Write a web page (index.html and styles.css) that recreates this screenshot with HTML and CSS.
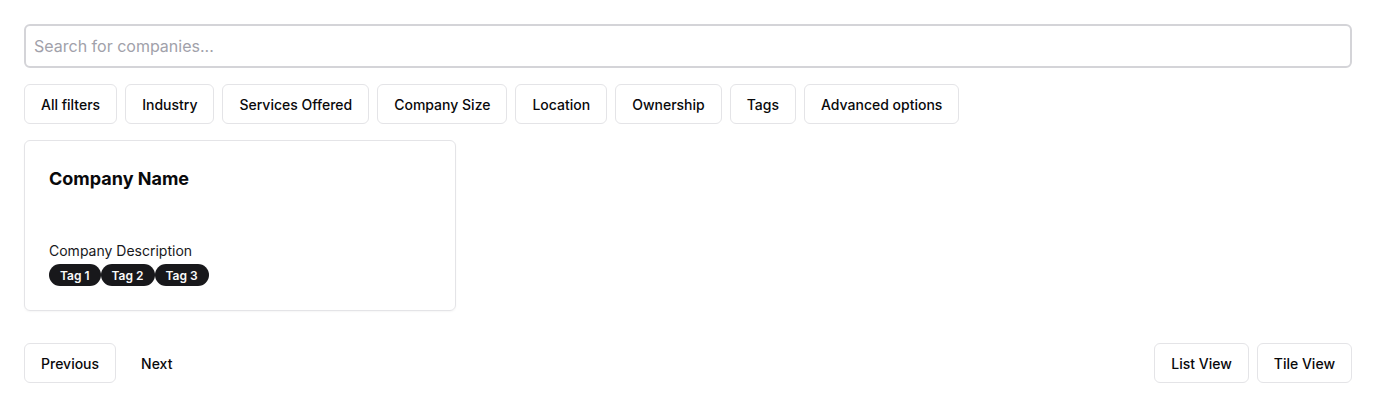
FILE: index.html
```html
<!DOCTYPE html>
<html>
<head>
<meta charset="utf-8">
<link rel="stylesheet" href="styles.css">
</head>
<body>
<main class="page">
  <input class="search" type="text" placeholder="Search for companies...">
  <div class="filters">
    <button class="btn">All filters</button>
    <button class="btn">Industry</button>
    <button class="btn">Services Offered</button>
    <button class="btn">Company Size</button>
    <button class="btn">Location</button>
    <button class="btn">Ownership</button>
    <button class="btn">Tags</button>
    <button class="btn">Advanced options</button>
  </div>
  <div class="grid">
    <div class="card">
      <h3 class="card-title">Company Name</h3>
      <p class="card-desc">Company Description</p>
      <div class="tags">
        <span class="tag">Tag 1</span>
        <span class="tag">Tag 2</span>
        <span class="tag">Tag 3</span>
      </div>
    </div>
  </div>
  <div class="pager">
    <div class="group">
      <button class="btn">Previous</button>
      <button class="btn ghost">Next</button>
    </div>
    <div class="group">
      <button class="btn">List View</button>
      <button class="btn">Tile View</button>
    </div>
  </div>
</main>
</body>
</html>
```
FILE: styles.css
```css
* { box-sizing: border-box; }
html, body { margin: 0; padding: 0; background: #fff; }
body {
  font-family: Inter, "Noto Sans", sans-serif;
  color: #09090b;
}
.page {
  padding: 24px;
  display: flex;
  flex-direction: column;
}
.search {
  width: 100%;
  height: 44px;
  border: 2px solid #d4d4d8;
  border-radius: 6px;
  padding: 0 8px;
  font-family: inherit;
  font-size: 16px;
  color: #09090b;
  outline: none;
}
.search::placeholder { color: #a1a1aa; }
.filters {
  margin-top: 16px;
  display: flex;
  gap: 8px;
}
.btn {
  height: 40px;
  padding: 0 16px;
  border: 1px solid #e4e4e7;
  border-radius: 6px;
  background: #fff;
  font-family: inherit;
  font-size: 14px;
  font-weight: 500;
  color: #09090b;
  cursor: pointer;
}
.btn.ghost { border-color: transparent; }
.grid {
  margin-top: 16px;
  display: grid;
  grid-template-columns: repeat(3, 1fr);
  width: 432px;
}
.card {
  border: 1px solid #e4e4e7;
  border-radius: 6px;
  padding: 24px 24px 24px;
  box-shadow: 0 1px 2px rgba(0,0,0,0.04);
  grid-column: 1 / -1;
}
.card-title {
  margin: 0;
  font-size: 18px;
  font-weight: 700;
  line-height: 28px;
}
.card-desc {
  margin: 48px 0 0;
  font-size: 14px;
  line-height: 20px;
  color: #18181b;
}
.tags {
  display: flex;
  margin-top: 3px;
}
.tag {
  display: inline-flex;
  align-items: center;
  height: 22px;
  padding: 0 11px;
  border-radius: 999px;
  background: #18181b;
  color: #fafafa;
  font-size: 12px;
  font-weight: 600;
}
.pager {
  margin-top: 32px;
  display: flex;
  justify-content: space-between;
}
.group { display: flex; gap: 8px; }
```
